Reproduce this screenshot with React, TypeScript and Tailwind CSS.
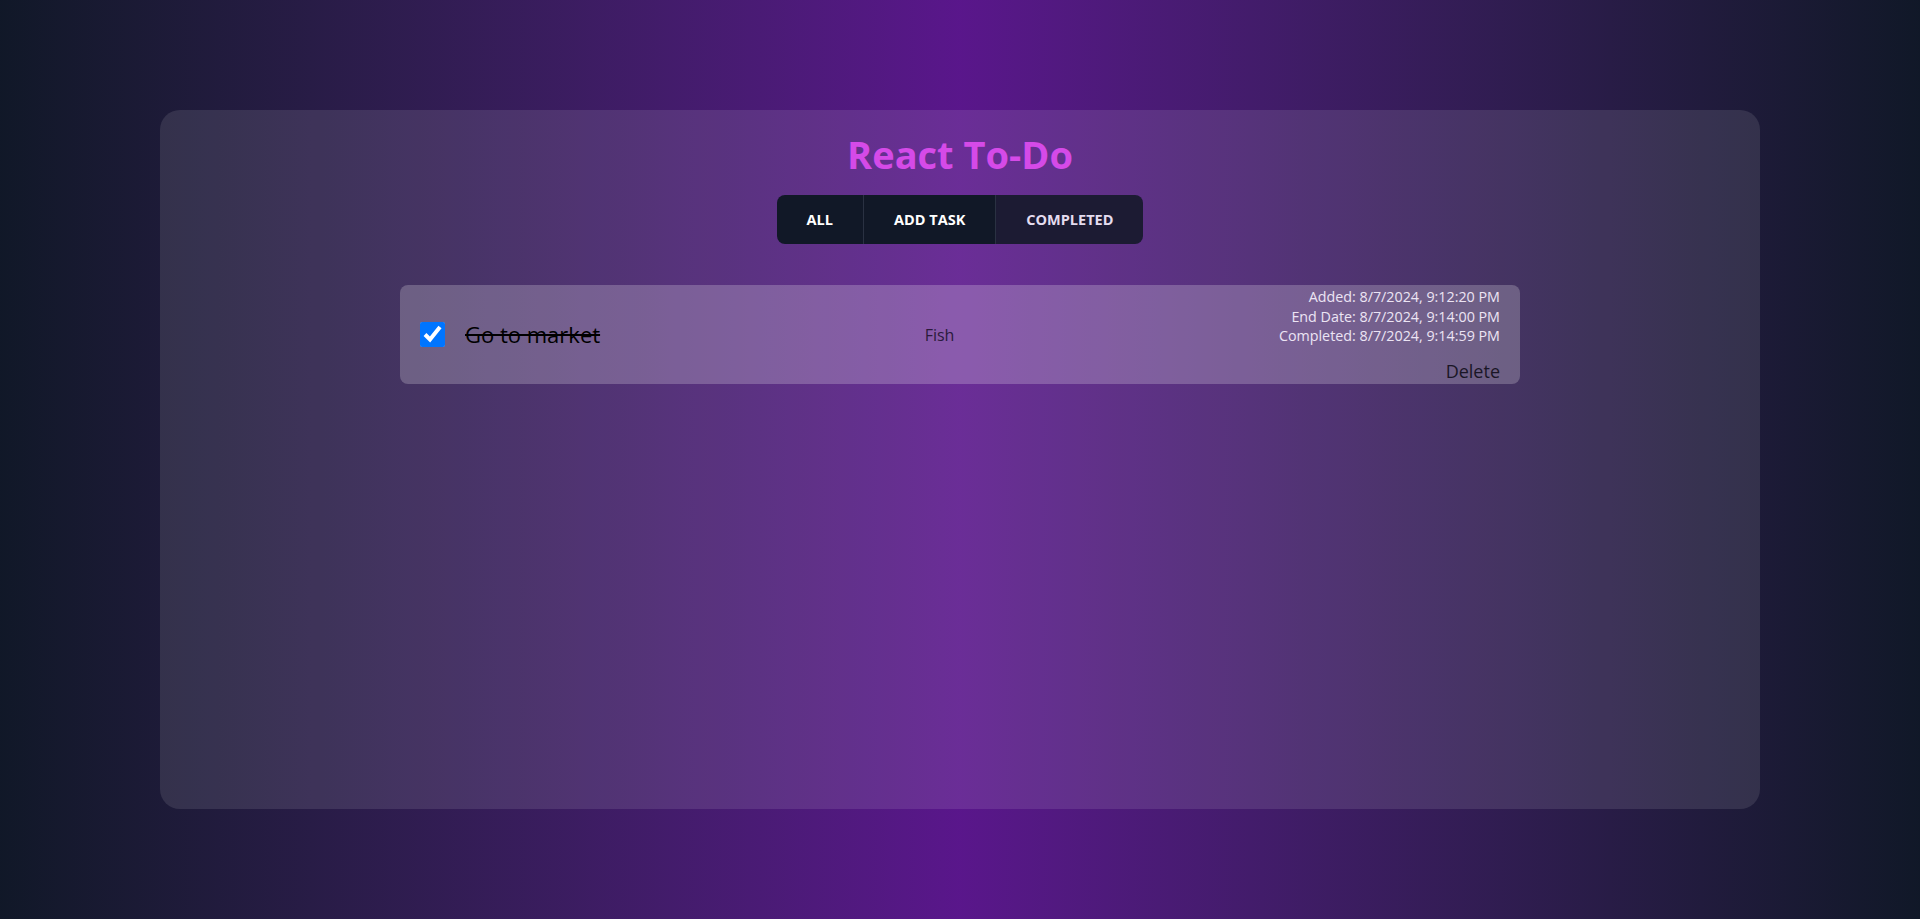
import React from "react";

const tabs = ["All", "Add Task", "Completed"];

export default function App() {
  return (
    <div className="min-h-screen w-full bg-linear-to-r from-gray-900 via-purple-900 to-gray-900 pt-[110px] font-['Open_Sans','Noto_Sans',sans-serif]">
      <div className="mx-auto flex h-[699px] w-[1600px] flex-col items-center rounded-[20px] bg-white/10 pt-[18px]">
        <h1 className="text-[38px] leading-[52px] font-bold text-[#d54ae8]">React To-Do</h1>

        <div className="mt-[15px] flex h-[49px] overflow-hidden rounded-lg">
          {tabs.map((t, i) => (
            <button
              key={t}
              className={
                "flex h-full items-center px-[30px] text-[14.5px] font-bold uppercase " +
                (i === 2
                  ? "bg-[#1c1b33] text-[#e4dcef]"
                  : "border-r border-[#2a3142] bg-[#111827] text-white")
              }
            >
              {t}
            </button>
          ))}
        </div>

        <ul className="mt-[41px] w-[1120px]">
          <li className="flex h-[99px] items-center justify-between rounded-lg bg-white/[0.22] pr-5 pl-5">
            <div className="flex items-center gap-5">
              <input
                type="checkbox"
                checked
                readOnly
                className="h-[25px] w-[25px] accent-[#0075ff]"
              />
              <span className="text-[22px] text-black line-through">Go to market</span>
            </div>
            <span className="text-[16px] text-[#2a1a3c]">Fish</span>
            <div className="flex flex-col items-end self-stretch pt-[2px]">
              <p className="text-[14.3px] leading-[19.5px] text-[#ece4f4]">Added: 8/7/2024, 9:12:20 PM</p>
              <p className="text-[14.3px] leading-[19.5px] text-[#ece4f4]">End Date: 8/7/2024, 9:14:00 PM</p>
              <p className="text-[14.3px] leading-[19.5px] text-[#ece4f4]">Completed: 8/7/2024, 9:14:59 PM</p>
              <button className="mt-[13px] text-[18px] leading-[24px] text-[#1a1626]">Delete</button>
            </div>
          </li>
        </ul>
      </div>
    </div>
  );
}
